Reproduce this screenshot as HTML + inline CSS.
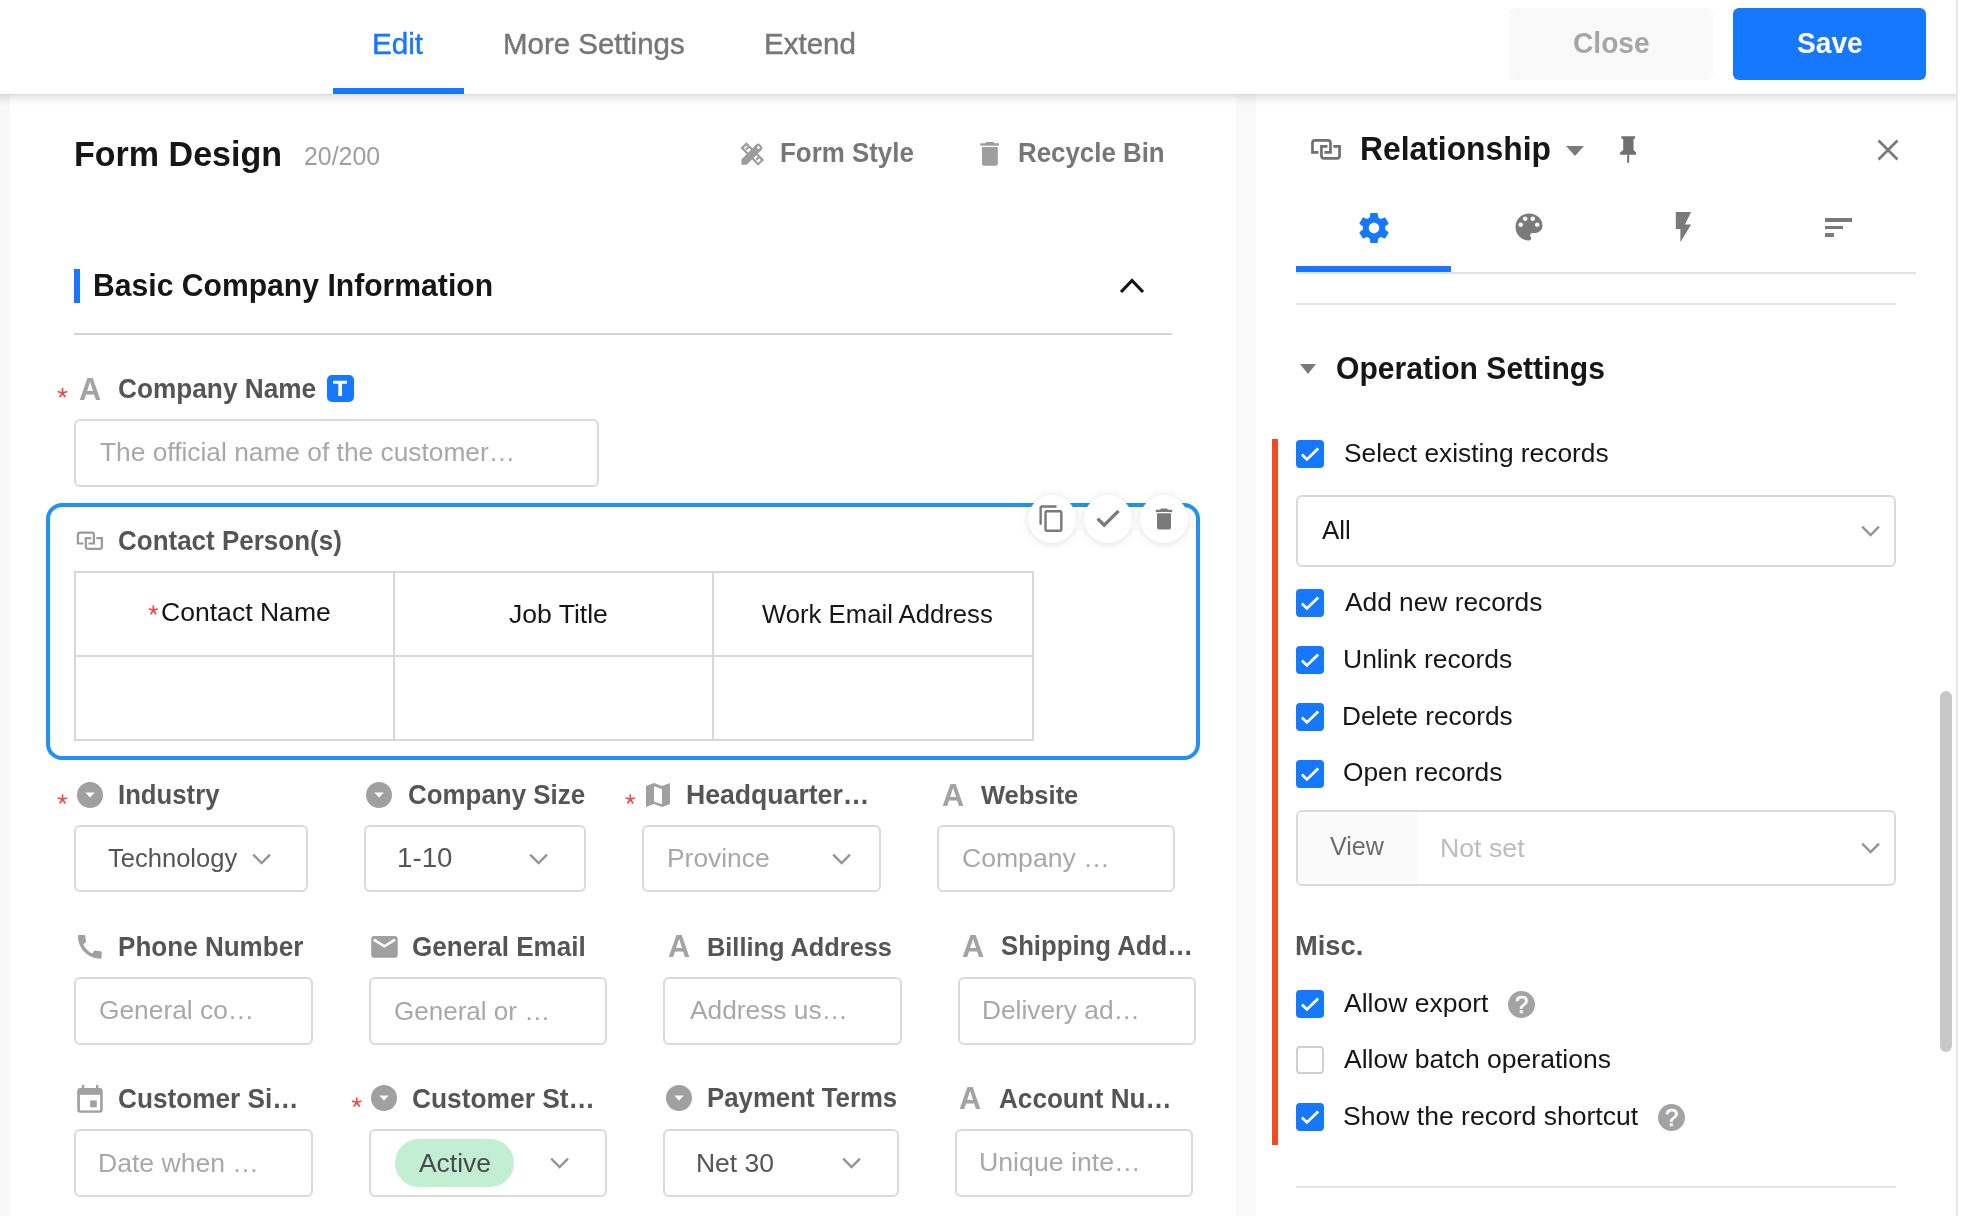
<!DOCTYPE html>
<html><head><meta charset="utf-8"><style>
html,body{margin:0;padding:0}
body{width:1962px;height:1216px;overflow:hidden;position:relative;background:#fff;font-family:"Liberation Sans",sans-serif}
.a{position:absolute;display:block}
.t{position:absolute;line-height:1;white-space:nowrap;will-change:transform}
</style></head><body>
<div class="a" style="left:0px;top:0px;width:10px;height:1216px;background:#f8f8f8"></div>
<div class="a" style="left:1236px;top:0px;width:20px;height:1216px;background:#f9f9f9"></div>
<div class="a" style="left:1956px;top:0px;width:2px;height:1216px;background:#e8e8e8;z-index:4"></div>
<div class="a" style="left:0px;top:0px;width:1956px;height:94px;background:#fff;z-index:2"></div>
<div class="a" style="left:0px;top:94px;width:1956px;height:12px;background:linear-gradient(rgba(0,0,0,0.135),rgba(0,0,0,0.08) 25%,rgba(0,0,0,0.035) 55%,rgba(0,0,0,0.01) 80%,rgba(0,0,0,0));z-index:2"></div>
<div class="t" style="left:372.4px;top:29.0px;font-size:29.62px;color:#1677ff;z-index:3;-webkit-text-stroke:0.45px #1677ff">Edit</div>
<div class="t" style="left:503.1px;top:29.0px;font-size:29.45px;color:#777;z-index:3;-webkit-text-stroke:0.45px #777">More Settings</div>
<div class="t" style="left:763.6px;top:28.9px;font-size:29.56px;color:#777;z-index:3;-webkit-text-stroke:0.45px #777">Extend</div>
<div class="a" style="left:333px;top:88px;width:131px;height:6px;background:#1677ff;z-index:3"></div>
<div class="a" style="left:1509px;top:8px;width:204px;height:72px;background:#f9f9f9;border-radius:6px;z-index:3"></div>
<div class="t" style="left:1572.8px;top:30.0px;font-size:28.13px;color:#a6a6a6;font-weight:700;transform:scaleY(1.04);transform-origin:0 23.8px;z-index:3">Close</div>
<div class="a" style="left:1733px;top:8px;width:193px;height:72px;background:#1677ff;border-radius:6px;z-index:3"></div>
<div class="t" style="left:1796.8px;top:30.0px;font-size:28.12px;color:#fff;font-weight:700;transform:scaleY(1.04);transform-origin:0 23.8px;z-index:3">Save</div>
<div class="t" style="left:73.7px;top:136.9px;font-size:34.06px;color:#161616;font-weight:700;transform:scaleY(1.04);transform-origin:0 28.8px;">Form Design</div>
<div class="t" style="left:303.7px;top:144.3px;font-size:24.92px;color:#9e9e9e;">20/200</div>
<div class="t" style="left:779.7px;top:141.0px;font-size:25.91px;color:#777;font-weight:700;transform:scaleY(1.04);transform-origin:0 21.9px;">Form Style</div>
<div class="t" style="left:1017.7px;top:141.1px;font-size:25.86px;color:#777;font-weight:700;transform:scaleY(1.04);transform-origin:0 21.9px;">Recycle Bin</div>
<div class="a" style="left:74px;top:269px;width:6px;height:34px;background:#1677ff"></div>
<div class="t" style="left:93.2px;top:270.5px;font-size:30.13px;color:#161616;font-weight:700;transform:scaleY(1.04);transform-origin:0 25.5px;">Basic Company Information</div>
<svg class="a" style="left:1118px;top:276px;" width="28" height="19" viewBox="0 0 28 19"><path d="M3 16L14 4.5 25 16" fill="none" stroke="#151515" stroke-width="3.2"/></svg>
<div class="a" style="left:74px;top:333px;width:1098px;height:2px;background:#d4d4d4"></div>
<div class="t" style="left:79.2px;top:374.5px;font-size:30.71px;color:#a3a3a3;font-weight:700;transform:scaleY(1.04);transform-origin:0 26.0px;">A</div>
<div class="t" style="left:118.1px;top:376.2px;font-size:26.23px;color:#555555;font-weight:700;transform:scaleY(1.04);transform-origin:0 22.2px;">Company Name</div>
<div class="a" style="left:327px;top:375px;width:27px;height:27px;background:#1677ff;border-radius:5px"></div>
<div class="a" style="left:74px;top:419px;width:525px;height:68px;border:2px solid #dadada;border-radius:6px;box-sizing:border-box;background:#fff"></div>
<div class="t" style="left:100.0px;top:439.0px;font-size:26.33px;color:#a8a8a8;">The official name of the customer…</div>
<div class="a" style="left:46px;top:503px;width:1154px;height:257px;border:4px solid #2191f3;border-radius:16px;box-sizing:border-box"></div>
<div class="t" style="left:117.8px;top:528.2px;font-size:25.99px;color:#555555;font-weight:700;transform:scaleY(1.04);transform-origin:0 22.0px;">Contact Person(s)</div>
<div class="a" style="left:74px;top:571px;width:960px;height:170px;border:2px solid #d8d8d8;box-sizing:border-box"></div>
<div class="a" style="left:74px;top:655px;width:960px;height:2px;background:#d8d8d8"></div>
<div class="a" style="left:392.6px;top:571px;width:2.0px;height:170px;background:#d8d8d8"></div>
<div class="a" style="left:711.8px;top:571px;width:2.0px;height:170px;background:#d8d8d8"></div>
<div class="t" style="left:161.4px;top:598.9px;font-size:26.57px;color:#161616;">Contact Name</div>
<div class="t" style="left:509.0px;top:601.4px;font-size:26.56px;color:#161616;">Job Title</div>
<div class="t" style="left:762.2px;top:601.9px;font-size:25.70px;color:#161616;">Work Email Address</div>
<div class="a" style="left:1028px;top:495px;width:48px;height:48px;background:#fff;border-radius:50%;box-shadow:0 1px 8px rgba(0,0,0,0.12)"></div>
<div class="a" style="left:1084px;top:495px;width:48px;height:48px;background:#fff;border-radius:50%;box-shadow:0 1px 8px rgba(0,0,0,0.12)"></div>
<div class="a" style="left:1140px;top:495px;width:48px;height:48px;background:#fff;border-radius:50%;box-shadow:0 1px 8px rgba(0,0,0,0.12)"></div>
<svg class="a" style="left:1037.3px;top:504.2px;" width="29.2" height="29.2" viewBox="0 0 24 24"><path fill="#7a7a7a" d="M16 1H4c-1.1 0-2 .9-2 2v14h2V3h12V1zm3 4H8c-1.1 0-2 .9-2 2v14c0 1.1.9 2 2 2h11c1.1 0 2-.9 2-2V7c0-1.1-.9-2-2-2zm0 16H8V7h11v14z"/></svg>
<svg class="a" style="left:1150px;top:505px;" width="28" height="28" viewBox="0 0 24 24"><path fill="#7a7a7a" d="M6 19c0 1.1.9 2 2 2h8c1.1 0 2-.9 2-2V7H6v12zM19 4h-3.5l-1-1h-5l-1 1H5v2h14V4z"/></svg>
<svg class="a" style="left:77px;top:782px;" width="26" height="26" viewBox="0 0 26 26"><circle cx="13" cy="13" r="13" fill="#a0a0a0"/><path d="M8.2 10.5h9.6L13 15.6z" fill="#fff"/></svg>
<div class="t" style="left:117.5px;top:782.8px;font-size:25.72px;color:#555555;font-weight:700;transform:scaleY(1.04);transform-origin:0 21.8px;">Industry</div>
<div class="a" style="left:74px;top:825px;width:234px;height:67px;border:2px solid #dadada;border-radius:6px;box-sizing:border-box;background:#fff"></div>
<div class="t" style="left:108.0px;top:845.9px;font-size:25.54px;color:#555555;">Technology</div>
<svg class="a" style="left:252.4px;top:853.2px;" width="19" height="12" viewBox="0 0 19 12"><path d="M1.2 1.6L9.6 10 18 1.6" fill="none" stroke="#939393" stroke-width="2.3"/></svg>
<svg class="a" style="left:366px;top:782px;" width="26" height="26" viewBox="0 0 26 26"><circle cx="13" cy="13" r="13" fill="#a0a0a0"/><path d="M8.2 10.5h9.6L13 15.6z" fill="#fff"/></svg>
<div class="t" style="left:407.5px;top:782.6px;font-size:25.93px;color:#555555;font-weight:700;transform:scaleY(1.04);transform-origin:0 22.0px;">Company Size</div>
<div class="a" style="left:364px;top:825px;width:222px;height:67px;border:2px solid #dadada;border-radius:6px;box-sizing:border-box;background:#fff"></div>
<div class="t" style="left:396.5px;top:844.0px;font-size:27.73px;color:#555555;">1-10</div>
<svg class="a" style="left:529.4px;top:853.2px;" width="19" height="12" viewBox="0 0 19 12"><path d="M1.2 1.6L9.6 10 18 1.6" fill="none" stroke="#939393" stroke-width="2.3"/></svg>
<div class="t" style="left:685.8px;top:782.1px;font-size:26.62px;color:#555555;font-weight:700;transform:scaleY(1.04);transform-origin:0 22.5px;">Headquarter…</div>
<div class="a" style="left:642px;top:825px;width:239px;height:67px;border:2px solid #dadada;border-radius:6px;box-sizing:border-box;background:#fff"></div>
<div class="t" style="left:667.0px;top:845.2px;font-size:26.38px;color:#a8a8a8;">Province</div>
<svg class="a" style="left:831.9px;top:853.2px;" width="19" height="12" viewBox="0 0 19 12"><path d="M1.2 1.6L9.6 10 18 1.6" fill="none" stroke="#939393" stroke-width="2.3"/></svg>
<div class="t" style="left:941.5px;top:780.7px;font-size:30.71px;color:#a3a3a3;font-weight:700;transform:scaleY(1.04);transform-origin:0 26.0px;">A</div>
<div class="t" style="left:981.4px;top:783.0px;font-size:25.51px;color:#555555;font-weight:700;transform:scaleY(1.04);transform-origin:0 21.6px;">Website</div>
<div class="a" style="left:937px;top:825px;width:238px;height:67px;border:2px solid #dadada;border-radius:6px;box-sizing:border-box;background:#fff"></div>
<div class="t" style="left:962.0px;top:845.0px;font-size:26.59px;color:#a8a8a8;">Company …</div>
<svg class="a" style="left:74.15px;top:931.15px;" width="31.6" height="31.6" viewBox="0 0 24 24"><path fill="#a0a0a0" d="M20.01 15.38c-1.23 0-2.42-.2-3.53-.56-.35-.12-.74-.03-1.01.24l-1.57 1.97c-2.83-1.35-5.48-3.9-6.89-6.83l1.95-1.66c.27-.28.35-.67.24-1.02-.37-1.11-.56-2.3-.56-3.53 0-.54-.45-.99-.99-.99H4.19C3.65 3 3 3.24 3 3.99 3 13.28 10.73 21 20.01 21c.71 0 .99-.63.99-1.18v-3.45c0-.54-.45-.99-.99-.99z"/></svg>
<div class="t" style="left:117.5px;top:933.9px;font-size:26.07px;color:#555555;font-weight:700;transform:scaleY(1.04);transform-origin:0 22.1px;">Phone Number</div>
<div class="a" style="left:74px;top:977px;width:239px;height:68px;border:2px solid #dadada;border-radius:6px;box-sizing:border-box;background:#fff"></div>
<div class="t" style="left:99.3px;top:997.3px;font-size:26.33px;color:#a8a8a8;">General co…</div>
<div class="t" style="left:411.9px;top:933.9px;font-size:26.06px;color:#555555;font-weight:700;transform:scaleY(1.04);transform-origin:0 22.1px;">General Email</div>
<div class="a" style="left:369px;top:977px;width:238px;height:68px;border:2px solid #dadada;border-radius:6px;box-sizing:border-box;background:#fff"></div>
<div class="t" style="left:394.3px;top:997.6px;font-size:26.03px;color:#a8a8a8;">General or …</div>
<div class="t" style="left:667.9px;top:932.2px;font-size:30.71px;color:#a3a3a3;font-weight:700;transform:scaleY(1.04);transform-origin:0 26.0px;">A</div>
<div class="t" style="left:706.9px;top:934.5px;font-size:25.35px;color:#555555;font-weight:700;transform:scaleY(1.04);transform-origin:0 21.5px;">Billing Address</div>
<div class="a" style="left:663px;top:977px;width:239px;height:68px;border:2px solid #dadada;border-radius:6px;box-sizing:border-box;background:#fff"></div>
<div class="t" style="left:689.6px;top:997.3px;font-size:26.31px;color:#a8a8a8;">Address us…</div>
<div class="t" style="left:962.2px;top:932.2px;font-size:30.71px;color:#a3a3a3;font-weight:700;transform:scaleY(1.04);transform-origin:0 26.0px;">A</div>
<div class="t" style="left:1001.3px;top:934.2px;font-size:25.73px;color:#555555;font-weight:700;transform:scaleY(1.04);transform-origin:0 21.8px;">Shipping Add…</div>
<div class="a" style="left:958px;top:977px;width:238px;height:68px;border:2px solid #dadada;border-radius:6px;box-sizing:border-box;background:#fff"></div>
<div class="t" style="left:982.2px;top:997.3px;font-size:26.31px;color:#a8a8a8;">Delivery ad…</div>
<div class="t" style="left:118.1px;top:1085.6px;font-size:26.20px;color:#555555;font-weight:700;transform:scaleY(1.04);transform-origin:0 22.2px;">Customer Si…</div>
<div class="a" style="left:74px;top:1129px;width:239px;height:68px;border:2px solid #dadada;border-radius:6px;box-sizing:border-box;background:#fff"></div>
<div class="t" style="left:98.4px;top:1149.5px;font-size:26.57px;color:#a8a8a8;">Date when …</div>
<svg class="a" style="left:371px;top:1085px;" width="26" height="26" viewBox="0 0 26 26"><circle cx="13" cy="13" r="13" fill="#a0a0a0"/><path d="M8.2 10.5h9.6L13 15.6z" fill="#fff"/></svg>
<div class="t" style="left:412.2px;top:1085.5px;font-size:26.34px;color:#555555;font-weight:700;transform:scaleY(1.04);transform-origin:0 22.3px;">Customer St…</div>
<div class="a" style="left:369px;top:1129px;width:238px;height:68px;border:2px solid #dadada;border-radius:6px;box-sizing:border-box;background:#fff"></div>
<div class="a" style="left:395px;top:1139px;width:119px;height:48px;background:#c2efd4;border-radius:24px"></div>
<div class="t" style="left:419.2px;top:1149.6px;font-size:26.41px;color:#4a4a4a;">Active</div>
<svg class="a" style="left:550.4px;top:1157.2px;" width="19" height="12" viewBox="0 0 19 12"><path d="M1.2 1.6L9.6 10 18 1.6" fill="none" stroke="#939393" stroke-width="2.3"/></svg>
<svg class="a" style="left:666px;top:1085px;" width="26" height="26" viewBox="0 0 26 26"><circle cx="13" cy="13" r="13" fill="#a0a0a0"/><path d="M8.2 10.5h9.6L13 15.6z" fill="#fff"/></svg>
<div class="t" style="left:706.9px;top:1086.0px;font-size:25.80px;color:#555555;font-weight:700;transform:scaleY(1.04);transform-origin:0 21.8px;">Payment Terms</div>
<div class="a" style="left:663px;top:1129px;width:236px;height:68px;border:2px solid #dadada;border-radius:6px;box-sizing:border-box;background:#fff"></div>
<div class="t" style="left:696.0px;top:1149.6px;font-size:26.48px;color:#555555;">Net 30</div>
<svg class="a" style="left:841.9px;top:1157.2px;" width="19" height="12" viewBox="0 0 19 12"><path d="M1.2 1.6L9.6 10 18 1.6" fill="none" stroke="#939393" stroke-width="2.3"/></svg>
<div class="t" style="left:959.2px;top:1084.2px;font-size:30.71px;color:#a3a3a3;font-weight:700;transform:scaleY(1.04);transform-origin:0 26.0px;">A</div>
<div class="t" style="left:998.5px;top:1085.7px;font-size:26.11px;color:#555555;font-weight:700;transform:scaleY(1.04);transform-origin:0 22.1px;">Account Nu…</div>
<div class="a" style="left:955px;top:1129px;width:238px;height:68px;border:2px solid #dadada;border-radius:6px;box-sizing:border-box;background:#fff"></div>
<div class="t" style="left:979.3px;top:1149.4px;font-size:26.70px;color:#a8a8a8;">Unique inte…</div>
<div class="t" style="left:1359.6px;top:134.3px;font-size:31.84px;color:#161616;font-weight:700;transform:scaleY(1.04);transform-origin:0 27.0px;">Relationship</div>
<svg class="a" style="left:1566px;top:146px;" width="18" height="10" viewBox="0 0 18 10"><path d="M0 0h18L9 10z" fill="#7a7a7a"/></svg>
<svg class="a" style="left:1876px;top:138px;" width="24" height="24" viewBox="0 0 24 24"><path d="M2.5 2.5l19 19M21.5 2.5l-19 19" stroke="#7a7a7a" stroke-width="2.8"/></svg>
<svg class="a" style="left:1355.5px;top:209.9px;" width="36" height="36" viewBox="0 0 24 24"><path fill="#1677ff" d="M19.43 12.98c.04-.32.07-.64.07-.98s-.03-.66-.07-.98l2.11-1.65c.19-.15.24-.42.12-.64l-2-3.46c-.12-.22-.39-.3-.61-.22l-2.49 1c-.52-.4-1.08-.73-1.69-.98l-.38-2.65C14.46 2.18 14.25 2 14 2h-4c-.25 0-.46.18-.49.42l-.38 2.65c-.61.25-1.17.59-1.69.98l-2.49-1c-.23-.09-.49 0-.61.22l-2 3.46c-.13.22-.07.49.12.64l2.11 1.65c-.04.32-.07.65-.07.98s.03.66.07.98l-2.11 1.65c-.19.15-.24.42-.12.64l2 3.46c.12.22.39.3.61.22l2.49-1c.52.4 1.08.73 1.69.98l.38 2.65c.03.24.24.42.49.42h4c.25 0 .46-.18.49-.42l.38-2.65c.61-.25 1.17-.59 1.69-.98l2.49 1c.23.09.49 0 .61-.22l2-3.46c.12-.22.07-.49-.12-.64l-2.11-1.65zM12 15.5c-1.93 0-3.5-1.57-3.5-3.5s1.57-3.5 3.5-3.5 3.5 1.57 3.5 3.5-1.57 3.5-3.5 3.5z"/></svg>
<svg class="a" style="left:1510.5px;top:209.4px;" width="36" height="36" viewBox="0 0 24 24"><path fill="#7a7a7a" d="M12 3c-4.97 0-9 4.03-9 9s4.03 9 9 9c.83 0 1.5-.67 1.5-1.5 0-.39-.15-.74-.39-1.01-.23-.26-.38-.61-.38-.99 0-.83.67-1.5 1.5-1.5H16c2.76 0 5-2.24 5-5 0-4.42-4.03-8-9-8zm-5.5 9c-.83 0-1.5-.67-1.5-1.5S5.67 9 6.5 9 8 9.67 8 10.5 7.33 12 6.5 12zm3-4C8.67 8 8 7.33 8 6.5S8.67 5 9.5 5s1.5.67 1.5 1.5S10.33 8 9.5 8zm5 0c-.83 0-1.5-.67-1.5-1.5S13.67 5 14.5 5s1.5.67 1.5 1.5S15.33 8 14.5 8zm3 4c-.83 0-1.5-.67-1.5-1.5S16.67 9 17.5 9s1.5.67 1.5 1.5-.67 1.5-1.5 1.5z"/></svg>
<svg class="a" style="left:1670px;top:208px;" width="30" height="40" viewBox="1670 208 30 40"><path fill="#7a7a7a" d="M1675.8 212.1H1691.1L1685 224.4H1691.1L1680.4 242.2V229H1675.8z"/></svg>
<div class="a" style="left:1825px;top:218px;width:27px;height:3.5px;background:#7a7a7a"></div>
<div class="a" style="left:1825px;top:226px;width:18px;height:3px;background:#7a7a7a"></div>
<div class="a" style="left:1825px;top:233.3px;width:9px;height:3.299999999999983px;background:#7a7a7a"></div>
<div class="a" style="left:1296px;top:272px;width:620px;height:2px;background:#e2e2e2"></div>
<div class="a" style="left:1296px;top:266px;width:155px;height:6px;background:#1677ff"></div>
<div class="a" style="left:1296px;top:303px;width:600px;height:2px;background:#e2e2e2"></div>
<svg class="a" style="left:1300px;top:364px;" width="16" height="10" viewBox="0 0 16 10"><path d="M0 0h16L8 10z" fill="#7a7a7a"/></svg>
<div class="t" style="left:1335.8px;top:353.5px;font-size:30.07px;color:#161616;font-weight:700;transform:scaleY(1.04);transform-origin:0 25.5px;">Operation Settings</div>
<div class="a" style="left:1272px;top:439px;width:6px;height:706px;background:#f34a23"></div>
<div class="a" style="left:1296px;top:440px;width:28px;height:28px;background:#1677ff;border-radius:4px"></div>
<svg class="a" style="left:1296px;top:440px;" width="28" height="28" viewBox="0 0 28 28"><path d="M5.9 14.6L10.9 19.4L22.2 8.4" fill="none" stroke="#fff" stroke-width="2.8"/></svg>
<div class="t" style="left:1343.6px;top:440.1px;font-size:26.31px;color:#161616;">Select existing records</div>
<div class="a" style="left:1296px;top:495px;width:600px;height:72px;border:2px solid #dadada;border-radius:6px;box-sizing:border-box;background:#fff"></div>
<div class="t" style="left:1322.3px;top:517.4px;font-size:26.00px;color:#161616;">All</div>
<svg class="a" style="left:1860.9px;top:525.2px;" width="19" height="12" viewBox="0 0 19 12"><path d="M1.2 1.6L9.6 10 18 1.6" fill="none" stroke="#939393" stroke-width="2.3"/></svg>
<div class="a" style="left:1296px;top:589px;width:28px;height:28px;background:#1677ff;border-radius:4px"></div>
<svg class="a" style="left:1296px;top:589px;" width="28" height="28" viewBox="0 0 28 28"><path d="M5.9 14.6L10.9 19.4L22.2 8.4" fill="none" stroke="#fff" stroke-width="2.8"/></svg>
<div class="t" style="left:1344.5px;top:589.1px;font-size:26.31px;color:#161616;">Add new records</div>
<div class="a" style="left:1296px;top:646px;width:28px;height:28px;background:#1677ff;border-radius:4px"></div>
<svg class="a" style="left:1296px;top:646px;" width="28" height="28" viewBox="0 0 28 28"><path d="M5.9 14.6L10.9 19.4L22.2 8.4" fill="none" stroke="#fff" stroke-width="2.8"/></svg>
<div class="t" style="left:1342.6px;top:646.1px;font-size:26.49px;color:#161616;">Unlink records</div>
<div class="a" style="left:1296px;top:703px;width:28px;height:28px;background:#1677ff;border-radius:4px"></div>
<svg class="a" style="left:1296px;top:703px;" width="28" height="28" viewBox="0 0 28 28"><path d="M5.9 14.6L10.9 19.4L22.2 8.4" fill="none" stroke="#fff" stroke-width="2.8"/></svg>
<div class="t" style="left:1342.4px;top:703.1px;font-size:26.25px;color:#161616;">Delete records</div>
<div class="a" style="left:1296px;top:760px;width:28px;height:28px;background:#1677ff;border-radius:4px"></div>
<svg class="a" style="left:1296px;top:760px;" width="28" height="28" viewBox="0 0 28 28"><path d="M5.9 14.6L10.9 19.4L22.2 8.4" fill="none" stroke="#fff" stroke-width="2.8"/></svg>
<div class="t" style="left:1343.4px;top:759.4px;font-size:26.31px;color:#161616;">Open records</div>
<div class="a" style="left:1296px;top:810px;width:600px;height:76px;border:2px solid #dadada;border-radius:6px;box-sizing:border-box;background:#fff"></div>
<div class="a" style="left:1298px;top:812px;width:119px;height:72px;background:#fafafa;border-radius:4px 0 0 4px"></div>
<div class="t" style="left:1330.2px;top:834.1px;font-size:25.07px;color:#6b6b6b;">View</div>
<div class="t" style="left:1440.0px;top:835.2px;font-size:26.70px;color:#bdbdbd;">Not set</div>
<svg class="a" style="left:1860.9px;top:842.2px;" width="19" height="12" viewBox="0 0 19 12"><path d="M1.2 1.6L9.6 10 18 1.6" fill="none" stroke="#939393" stroke-width="2.3"/></svg>
<div class="t" style="left:1295.2px;top:931.5px;font-size:27.31px;color:#555555;font-weight:700;transform:scaleY(1.04);transform-origin:0 23.1px;">Misc.</div>
<div class="a" style="left:1296px;top:990px;width:28px;height:28px;background:#1677ff;border-radius:4px"></div>
<svg class="a" style="left:1296px;top:990px;" width="28" height="28" viewBox="0 0 28 28"><path d="M5.9 14.6L10.9 19.4L22.2 8.4" fill="none" stroke="#fff" stroke-width="2.8"/></svg>
<div class="t" style="left:1343.9px;top:989.5px;font-size:26.52px;color:#161616;">Allow export</div>
<svg class="a" style="left:1507.5px;top:991px;" width="27" height="27" viewBox="0 0 26 26"><circle cx="13" cy="13" r="13" fill="#a3a3a3"/><text x="13.2" y="21" text-anchor="middle" font-family="Liberation Sans" font-size="23" fill="#fff" stroke="#fff" stroke-width="0.5">?</text></svg>
<div class="a" style="left:1296px;top:1046px;width:28px;height:28px;border:2px solid #cfcfcf;border-radius:4px;box-sizing:border-box;background:#fff"></div>
<div class="t" style="left:1343.9px;top:1045.5px;font-size:26.54px;color:#161616;">Allow batch operations</div>
<div class="a" style="left:1296px;top:1103px;width:28px;height:28px;background:#1677ff;border-radius:4px"></div>
<svg class="a" style="left:1296px;top:1103px;" width="28" height="28" viewBox="0 0 28 28"><path d="M5.9 14.6L10.9 19.4L22.2 8.4" fill="none" stroke="#fff" stroke-width="2.8"/></svg>
<div class="t" style="left:1342.8px;top:1102.5px;font-size:26.56px;color:#161616;">Show the record shortcut</div>
<svg class="a" style="left:1657.5px;top:1104px;" width="27" height="27" viewBox="0 0 26 26"><circle cx="13" cy="13" r="13" fill="#a3a3a3"/><text x="13.2" y="21" text-anchor="middle" font-family="Liberation Sans" font-size="23" fill="#fff" stroke="#fff" stroke-width="0.5">?</text></svg>
<div class="a" style="left:1296px;top:1186px;width:600px;height:2px;background:#e2e2e2"></div>
<div class="a" style="left:1940px;top:691px;width:12px;height:361px;background:#c8c8c8;border-radius:6px"></div>
<svg class="a" style="left:0;top:0;z-index:5" width="1962" height="1216" viewBox="0 0 1962 1216">
<g fill="#9c9c9c"><g transform="translate(752.3 154) rotate(45)"><path fill-rule="evenodd" d="M-12.55 -4.13h25.1v8.27h-25.1zM-10.3 -1.9v3.8h20.6v-3.8z"/><rect x="-8.8" y="-2" width="2.2" height="3.3"/><rect x="5.8" y="-2" width="2.2" height="3.3"/></g><g transform="translate(741.4 164.7) rotate(-45)"><path fill-rule="evenodd" d="M0 0L3.75 -3.75H25A2.5 2.5 0 0 1 27.5 -1.25V1.25A2.5 2.5 0 0 1 25 3.75H3.75zM24.2 0m-1.4 0a1.4 1.4 0 1 0 2.8 0a1.4 1.4 0 1 0 -2.8 0z"/></g></g>
<path fill="#9e9e9e" d="M986.3 142.1H993.5L994.6 143.3H998.9V145.8H980.4V143.3H985.2zM982 147.1H997.8V163.2Q997.8 165.8 995.2 165.8H984.6Q982 165.8 982 163.2z"/>
<path d="M62.50 393.00L62.50 388.70M62.50 393.00L58.40 391.70M62.50 393.00L66.60 391.70M62.50 393.00L60.00 396.60M62.50 393.00L65.00 396.60" stroke="#f5483f" stroke-width="1.7" fill="none" stroke-linecap="round"/>
<path fill="#fff" d="M333.2 380.8H347V383.8H342V396H338.3V383.8H333.2z"/>
<path d="M83.31 543.52L77.90 543.52L77.90 534.99Q77.90 532.70 80.19 532.70L91.63 532.70Q93.92 532.70 93.92 534.99L93.92 543.52L88.50 543.52M91.23 538.07L85.82 538.07L85.82 546.52Q85.82 548.80 88.11 548.80L99.64 548.80Q101.92 548.80 101.92 546.52L101.92 538.07L96.34 538.07" fill="none" stroke="#9a9a9a" stroke-width="2.2"/>
<path d="M153.30 610.30L153.30 606.21M153.30 610.30L149.41 609.06M153.30 610.30L157.20 609.06M153.30 610.30L150.93 613.72M153.30 610.30L155.68 613.72" stroke="#f5483f" stroke-width="1.7" fill="none" stroke-linecap="round"/>
<path d="M1097.6 518.6L1104.2 525.2L1118.6 510.8" fill="none" stroke="#7a7a7a" stroke-width="3.3"/>
<path d="M62.50 799.30L62.50 795.00M62.50 799.30L58.40 798.00M62.50 799.30L66.60 798.00M62.50 799.30L60.00 802.90M62.50 799.30L65.00 802.90" stroke="#f5483f" stroke-width="1.7" fill="none" stroke-linecap="round"/>
<path d="M630.30 799.30L630.30 795.00M630.30 799.30L626.20 798.00M630.30 799.30L634.40 798.00M630.30 799.30L627.80 802.90M630.30 799.30L632.80 802.90" stroke="#f5483f" stroke-width="1.7" fill="none" stroke-linecap="round"/>
<path fill="#a0a0a0" fill-rule="evenodd" d="M646 786L654 783 662 786 670 783V804L662 807 654 804 646 807zM654 786.2V801.6L662 804.3V788.9z"/>
<rect x="371.2" y="936.1" width="26.5" height="21.6" rx="3" fill="#a0a0a0"/><path d="M373.8 939.6L384.4 946.3 395 939.6" fill="none" stroke="#fff" stroke-width="2.6"/>
<g fill="#a0a0a0"><rect x="77.2" y="1087.9" width="25.5" height="24.8" rx="3"/><rect x="81.8" y="1084.9" width="2.4" height="4"/><rect x="96" y="1084.9" width="2.4" height="4"/></g><rect x="79.9" y="1094.8" width="20.2" height="15.6" fill="#fff"/><rect x="90.2" y="1100.4" width="6.6" height="6.9" fill="#a0a0a0"/>
<path d="M356.70 1102.50L356.70 1098.20M356.70 1102.50L352.60 1101.20M356.70 1102.50L360.80 1101.20M356.70 1102.50L354.20 1106.10M356.70 1102.50L359.20 1106.10" stroke="#f5483f" stroke-width="1.7" fill="none" stroke-linecap="round"/>
<path d="M1318.50 152.45L1312.45 152.45L1312.45 142.95Q1312.45 140.35 1315.05 140.35L1327.85 140.35Q1330.45 140.35 1330.45 142.95L1330.45 152.45L1324.40 152.45M1327.50 146.45L1321.45 146.45L1321.45 155.85Q1321.45 158.45 1324.05 158.45L1336.95 158.45Q1339.55 158.45 1339.55 155.85L1339.55 146.45L1333.30 146.45" fill="none" stroke="#707070" stroke-width="2.7"/>
<path fill="#707070" d="M1621.4 136.2H1635V138.7H1633.5V150.1L1636.1 152.5V154.8H1629.2V162.8H1627.2V154.8H1620.1V152.5L1623.2 150.1V138.7H1621.4z"/>
</svg>
</body></html>
